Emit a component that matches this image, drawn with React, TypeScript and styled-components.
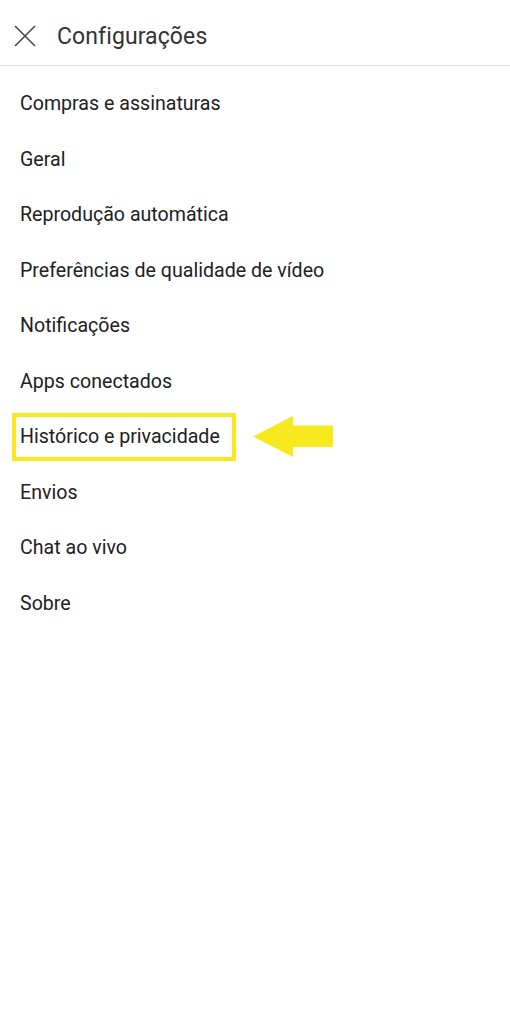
import React from 'react';
import styled, { createGlobalStyle } from 'styled-components';

const GlobalStyle = createGlobalStyle`
  html, body {
    margin: 0;
    padding: 0;
    background: #ffffff;
  }
  body {
    font-family: Roboto, "Noto Sans", "Liberation Sans", sans-serif;
  }
`;

const Page = styled.div`
  width: 510px;
  min-height: 1024px;
  background: #ffffff;
`;

const Header = styled.header`
  display: flex;
  align-items: center;
  height: 66px;
  padding: 7px 14px 0;
  box-sizing: border-box;
  border-bottom: 1px solid #e2e2e2;
  gap: 21px;
`;

const CloseButton = styled.button`
  display: flex;
  align-items: center;
  justify-content: center;
  width: 22px;
  height: 22px;
  padding: 0;
  border: none;
  background: none;
  color: #4a4a4a;
  cursor: pointer;
`;

const Title = styled.h1`
  margin: 0;
  font-size: 23px;
  font-weight: 400;
  color: #333333;
  letter-spacing: 0.1px;
`;

const List = styled.ul`
  list-style: none;
  margin: 0;
  padding: 10px 0 0;
`;

const Row = styled.li`
  position: relative;
  display: flex;
  align-items: center;
  height: 55.5px;
  padding: 0 20px;
  font-size: 19.6px;
  color: #212121;
  cursor: pointer;
`;

const Label = styled.span<{ $marked?: boolean }>`
  position: relative;
  ${({ $marked }) =>
    $marked &&
    `
    &::after {
      content: '';
      position: absolute;
      top: -12px;
      bottom: -13px;
      left: -8px;
      right: -16px;
      border: 4px solid #f8e81e;
    }
  `}
`;

const Arrow = styled.svg`
  position: absolute;
  left: 253px;
  top: 50%;
  transform: translateY(-50%);
`;

const items = [
  'Compras e assinaturas',
  'Geral',
  'Reprodução automática',
  'Preferências de qualidade de vídeo',
  'Notificações',
  'Apps conectados',
  'Histórico e privacidade',
  'Envios',
  'Chat ao vivo',
  'Sobre',
];

const App = () => {
  return (
    <Page>
      <GlobalStyle />
      <Header>
        <CloseButton aria-label="Fechar">
          <svg width="22" height="22" viewBox="0 0 22 22">
            <path d="M1 1 L21 21 M21 1 L1 21" stroke="currentColor" strokeWidth="1.6" />
          </svg>
        </CloseButton>
        <Title>Configurações</Title>
      </Header>
      <List>
        {items.map((item) => {
          const marked = item === 'Histórico e privacidade';
          return (
            <Row key={item}>
              <Label $marked={marked}>{item}</Label>
              {marked && (
                <Arrow width="81" height="42" viewBox="0 0 81 42">
                  <polygon points="0,20.5 40,0 40,9.5 80,9.5 80,31 40,31 40,41" fill="#f8e81e" />
                </Arrow>
              )}
            </Row>
          );
        })}
      </List>
    </Page>
  );
};

export default App;
